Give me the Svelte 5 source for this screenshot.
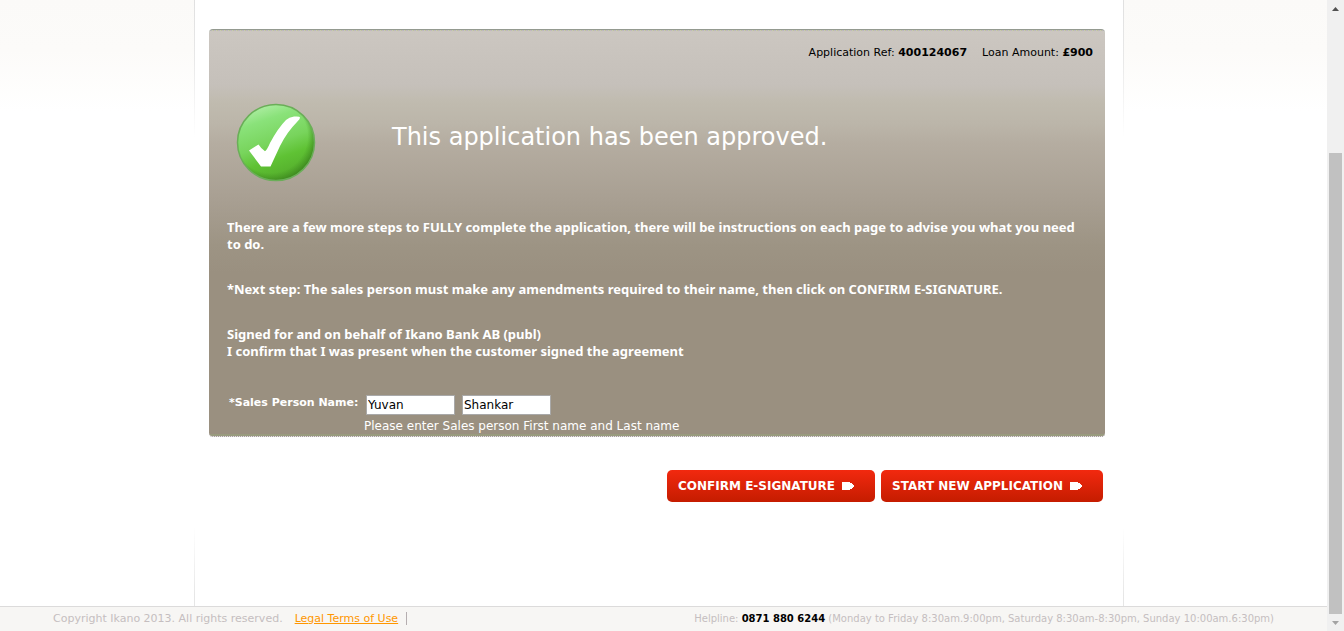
<script>
  let firstName = $state('Yuvan');
  let lastName = $state('Shankar');
</script>

{#snippet tag()}
  <svg class="tag" viewBox="0 0 12 8" aria-hidden="true"><path d="M0 0h8v1h2v1h1v1h1v2h-1v1h-1v1H8v1H0z" fill="#fff" /></svg>
{/snippet}

<div class="window">
  <div class="page">
    <div class="columns">
      <div class="side"></div>
      <main>
        <section class="panel">
          <p class="summary">
            <span>Application Ref: <b>400124067</b></span>
            <span>Loan Amount: <b>£900</b></span>
          </p>
          <header>
            <svg class="check" viewBox="0 0 80 80" aria-hidden="true">
              <defs>
                <linearGradient id="ball" x1="0.3" y1="0" x2="0.65" y2="1">
                  <stop offset="0" stop-color="#b0eea6" />
                  <stop offset="0.2" stop-color="#8ae27a" />
                  <stop offset="0.5" stop-color="#78d45c" />
                  <stop offset="0.7" stop-color="#5fc234" />
                  <stop offset="1" stop-color="#52a92a" />
                </linearGradient>
                <radialGradient id="rim" cx="0.43" cy="0.42" r="0.6">
                  <stop offset="0.8" stop-color="#3f8f20" stop-opacity="0" />
                  <stop offset="1" stop-color="#38801c" stop-opacity="0.8" />
                </radialGradient>
              </defs>
              <ellipse cx="40" cy="39.500" rx="38.500" ry="38" fill="url(#ball)" />
              <ellipse cx="40" cy="39.500" rx="38.500" ry="38" fill="url(#rim)" stroke="#6aae58" stroke-width="1.500" />
              <path d="M13 47.500 22.500 41.500Q25.500 46 29 48.300Q31 47 34 40Q42 25 50 17Q53 14 58 13.500Q64 13 64 14.500Q64 16 61 19Q51 29 44 43Q38 56 34.500 63.500H25Z" fill="#fff" />
            </svg>
            <h1>This application has been approved.</h1>
          </header>
          <div class="copy">
            <p>There are a few more steps to FULLY complete the application, there will be instructions on each page to advise you what you need to do.</p>
            <p>*Next step: The sales person must make any amendments required to their name, then click on CONFIRM E-SIGNATURE.</p>
            <p>Signed for and on behalf of Ikano Bank AB (publ)<br />I confirm that I was present when the customer signed the agreement</p>
          </div>
          <div class="names">
            <label for="first">*Sales Person Name:</label>
            <div class="fields">
              <input id="first" type="text" bind:value={firstName} />
              <input type="text" aria-label="Last name" bind:value={lastName} />
            </div>
            <p>Please enter Sales person First name and Last name</p>
          </div>
        </section>
        <div class="actions">
          <button type="button">CONFIRM E-SIGNATURE {@render tag()}</button>
          <button type="button">START NEW APPLICATION {@render tag()}</button>
        </div>
      </main>
      <div class="side"></div>
    </div>
    <footer>
      <span class="copyright">Copyright Ikano 2013. All rights reserved.</span>
      <a href="#legal">Legal Terms of Use</a>
      <span class="helpline">Helpline: <b>0871 880 6244</b> (Monday to Friday 8:30am.9:00pm, Saturday 8:30am-8:30pm, Sunday 10:00am.6:30pm)</span>
    </footer>
  </div>
  <div class="scroll" aria-hidden="true">
    <svg viewBox="0 0 7 4"><path d="M0 4h7L3.500 0z" fill="#505050" /></svg>
    <div class="thumb"></div>
    <svg viewBox="0 0 7 4"><path d="M0 0h7L3.500 4z" fill="#a3a3a3" /></svg>
  </div>
</div>

<style>
  .window {
    display: flex;
    min-height: 100vh;
    background: #fff;
    color: #000;
    font: 11px/17px Verdana, "DejaVu Sans", sans-serif;
  }
  p, h1 { margin: 0; }
  .page {
    flex: 1;
    min-width: 0;
    display: flex;
    flex-direction: column;
  }
  .columns {
    flex: 1;
    display: grid;
    grid-template-columns: 194px minmax(0, 1fr) 203px;
  }
  .side {
    background: linear-gradient(#fbfaf8, #fcfbf9 50px, #fff 112px);
  }
  main {
    padding: 29px 18px 40px 14px;
    border: solid transparent;
    border-width: 0 1px;
    border-image: linear-gradient(#e0e0e0, #e8e8e8 60px, #fff 138px, #fff calc(100% - 80px), #e6e6e6 calc(100% - 10px)) 1;
  }
  .panel {
    min-height: 408px;
    box-sizing: border-box;
    border-top: 1px solid #949a90;
    border-bottom: 1px dotted #8c7f80;
    border-radius: 4px;
    background:
      repeating-linear-gradient(90deg, #b9c4a0 0 1px, #c8b4bc 1px 2px, #b4bcc0 2px 3px, #ccc7b0 3px 4px) top / 100% 1px no-repeat,
      linear-gradient(#999b7e, #999b7e) bottom / 100% 2px no-repeat,
      linear-gradient(#ccc7c1, #c5c0ba 55px, #c0bbaf 72px, #bbb5a9 95px, #b5ada1 112px, #a89f92 170px, #9d9484 215px, #9a9080 243px);
    background-clip: padding-box;
    color: #fff;
  }
  .summary {
    display: flex;
    justify-content: flex-end;
    gap: 15px;
    padding: 14px 12px 0 0;
    color: #000;
  }
  header {
    display: flex;
    align-items: center;
    gap: 76px;
    padding: 42px 27px 0;
  }
  .check { width: 80px; height: 80px; flex: none; }
  h1 { font-size: 24px; line-height: 32px; font-weight: 400; padding-bottom: 12px; }
  .copy {
    display: grid;
    gap: 28px;
    padding: 36px 18px 0;
    font-family: Tahoma, "Noto Sans", sans-serif;
    font-size: 13px;
    font-weight: 700;
  }
  .names {
    display: grid;
    grid-template-columns: 134px 1fr;
    column-gap: 3px;
    padding: 34px 20px 0;
  }
  .names label { font-weight: 700; }
  .fields { display: flex; gap: 7px; padding-top: 1px; }
  .names p { grid-column: 2; font-size: 12px; padding-top: 3px; margin-left: -2px; }
  input {
    box-sizing: border-box;
    width: 89px;
    height: 20px;
    padding: 1px;
    border: 1px solid #a9a9a9;
    background: #fff;
    color: #000;
    font: 12px Verdana, "DejaVu Sans", sans-serif;
  }
  .actions {
    display: flex;
    justify-content: flex-end;
    gap: 6px;
    padding: 33px 2px 0 0;
  }
  button {
    display: flex;
    align-items: center;
    gap: 7px;
    height: 32px;
    padding: 0 21px 0 11px;
    border: 0;
    border-radius: 5px;
    background: linear-gradient(#f2290f, #c51c00);
    color: #fff;
    font: 700 12px Verdana, "DejaVu Sans", sans-serif;
  }
  .tag { width: 12px; height: 8px; }
  footer {
    display: flex;
    align-items: center;
    height: 25px;
    padding: 0 53px 2px;
    box-sizing: border-box;
    border-top: 1px solid #dcdbdb;
    background: #f7f6f4;
    color: #c5bec0;
    white-space: nowrap;
  }
  footer a { margin-left: 12px; padding-right: 8px; color: #ff9600; border-right: 1px solid #b5aeb0; line-height: 13px; }
  .helpline { margin-left: auto; font-size: 10px; }
  .helpline b { color: #000; }
  .scroll {
    display: flex;
    flex-direction: column;
    align-items: center;
    width: 17px;
    padding: 7px 0 6px;
    box-sizing: border-box;
    background: #f0f0f0;
  }
  .scroll svg { width: 7px; height: 4px; }
  .thumb { width: 13px; flex: 1; margin: 142px 0 7px; background: #c1c1c1; }
</style>
